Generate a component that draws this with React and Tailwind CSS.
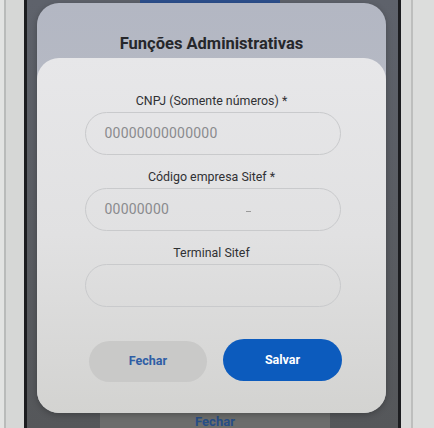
export default function App() {
  const fields = [
    { label: "CNPJ (Somente números) *", placeholder: "00000000000000" },
    { label: "Código empresa Sitef *", placeholder: "00000000", cursor: true },
    { label: "Terminal Sitef", placeholder: "" },
  ];

  return (
    <div className="w-[434px] h-[428px] flex overflow-hidden bg-[#d4d5d4] font-['Roboto',sans-serif]">
      {/* left bezel */}
      <div className="w-[24px] flex">
        <div className="w-[4px] bg-[#e2e3e2]" />
        <div className="w-[2px] bg-[#b9bbba]" />
        <div className="flex-1 bg-[#d6d7d6]" />
      </div>
      <div className="w-[3px] bg-[#1c1d20]" />

      {/* screen */}
      <div className="relative flex-1 flex flex-col bg-gradient-to-b from-[#5e626b] to-[#55575a]">
        <div className="w-[140px] h-[4px] bg-[#2c4f8c] ml-[113px]" />
        <div className="flex-1" />
        <div className="ml-[73px] w-[230px] h-[15px] bg-[#6c6d6c] flex items-start justify-center">
          <span className="text-[13px] leading-[17px] font-bold text-[#274d86]">Fechar</span>
        </div>

        {/* modal */}
        <div className="absolute left-[10px] top-[3px] w-[349px] h-[410px] rounded-[22px] bg-gradient-to-b from-[#b3b7c3] to-[#bfc1c6] flex flex-col shadow-[0_2px_6px_rgba(0,0,0,0.25)]">
          <div className="h-[55px] pt-[31px] text-center">
            <h1 className="text-[16.5px] leading-[20px] font-bold text-[#26272b]">Funções Administrativas</h1>
          </div>
          <div className="flex-1 rounded-[22px] bg-gradient-to-b from-[#e7e7e9] via-[#e1e1e2] to-[#d3d3d1] pt-[35px] flex flex-col items-center">
            {fields.map((f, i) => (
              <div key={i} className={`flex flex-col items-center ${i > 0 ? "mt-[14px]" : ""}`}>
                <label className="text-[12.4px] leading-[16px] text-[#303134]">{f.label}</label>
                <div className="relative mt-[3px] w-[256px] h-[43px] rounded-full border border-[#c9cacc] flex items-center px-[19px] ml-[2px]">
                  <span className="text-[14px] text-[#8a8b8e] tracking-[0.2px]">{f.placeholder}</span>
                  {f.cursor && <span className="absolute left-[160px] top-[22px] w-[5px] h-[1px] bg-[#9a9a9a]" />}
                </div>
              </div>
            ))}
            <div className="mt-[32px] flex gap-[16px] items-start ml-[8px]">
              <button className="mt-[2px] w-[118px] h-[41px] rounded-full bg-[#c9c9c8] text-[12.5px] font-bold text-[#2f5ea5]">
                Fechar
              </button>
              <button className="w-[119px] h-[42px] rounded-full bg-[#0c5bbd] text-[12.5px] font-bold text-white">
                Salvar
              </button>
            </div>
          </div>
        </div>
      </div>

      {/* right bezel */}
      <div className="w-[3px] bg-[#1c1d20]" />
      <div className="w-[33px] flex">
        <div className="w-[10px] bg-[#d9dad9]" />
        <div className="w-[2px] bg-[#bdbebd]" />
        <div className="flex-1 bg-[#dcdddc]" />
      </div>
    </div>
  );
}
